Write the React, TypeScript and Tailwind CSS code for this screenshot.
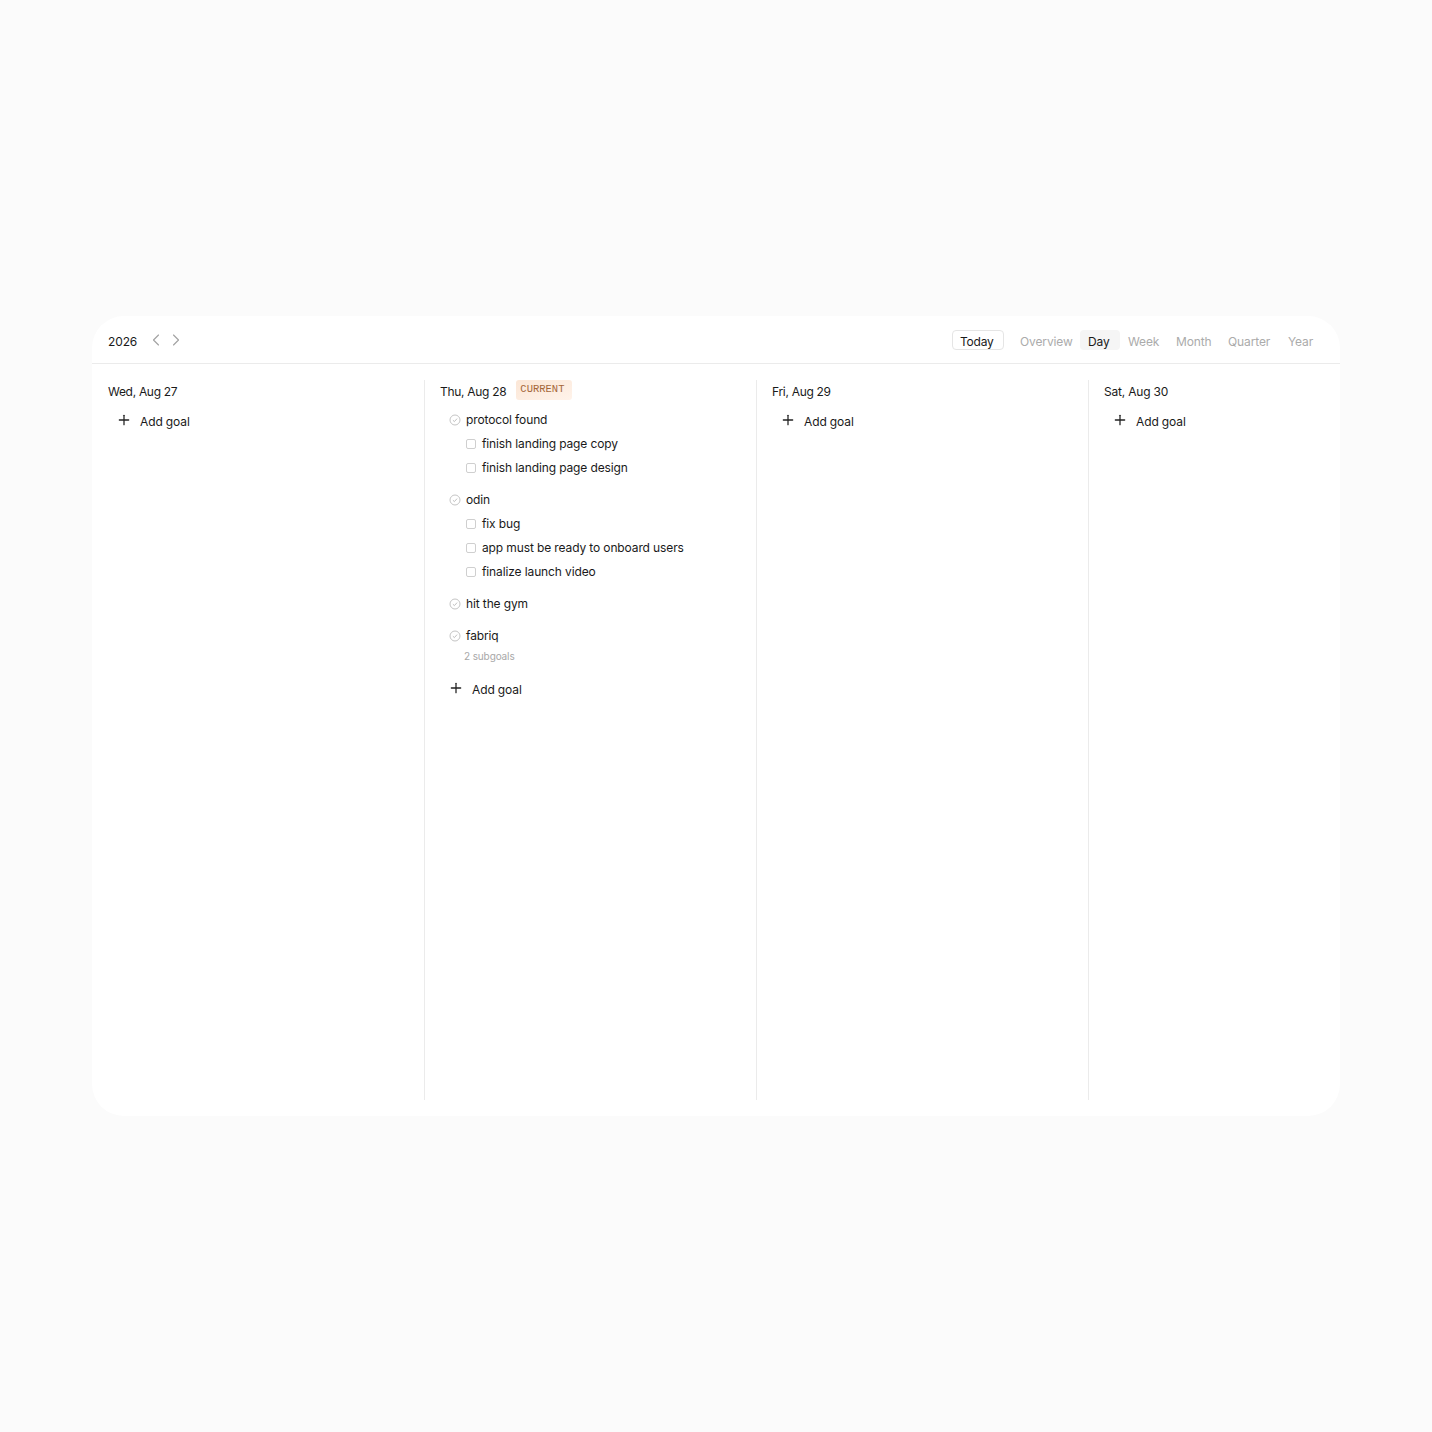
import { ChevronLeft, ChevronRight, Plus } from 'lucide-react';

const views = [
  { name: 'Overview', width: 'w-[68px]' },
  { name: 'Day', width: 'w-10' },
  { name: 'Week', width: 'w-12' },
  { name: 'Month', width: 'w-[52px]' },
  { name: 'Quarter', width: 'w-[60px]' },
  { name: 'Year', width: 'w-[41px]' },
];

const goals = [
  { name: 'protocol found', tasks: ['finish landing page copy', 'finish landing page design'] },
  { name: 'odin', tasks: ['fix bug', 'app must be ready to onboard users', 'finalize launch video'] },
  { name: 'hit the gym', tasks: [] },
  { name: 'fabriq', tasks: [], note: '2 subgoals' },
];

function GoalIcon() {
  return (
    <svg width="12" height="12" viewBox="0 0 12 12" fill="none" className="shrink-0">
      <circle cx="6" cy="6" r="5" stroke="#c4c4c4" />
      <path d="M3.9 6.2 5.4 7.6 8.1 4.6" stroke="#b0b0b0" strokeWidth="0.8" />
    </svg>
  );
}

function AddGoal() {
  return (
    <div className="flex h-6 items-center pl-2">
      <Plus className="mb-[2px] h-4 w-4 text-[#222]" strokeWidth={1.9} />
      <span className="ml-2 mt-px">Add goal</span>
    </div>
  );
}

function Goal({ name, tasks, note }: { name: string; tasks: string[]; note?: string }) {
  return (
    <div className="mb-2">
      <div className="flex h-6 items-center gap-[5px] pl-[9px]">
        <GoalIcon />
        <span>{name}</span>
      </div>
      {tasks.map((task) => (
        <div key={task} className="flex h-6 items-center gap-[6px] pl-[26px]">
          <span className="h-[10px] w-[10px] shrink-0 rounded-[2px] border border-[#cfcfcf]" />
          <span>{task}</span>
        </div>
      ))}
      {note && <div className="mt-[2px] pl-6 text-[10px] leading-[12px] text-[#a8a8a8]">{note}</div>}
    </div>
  );
}

export default function App() {
  return (
    <div className="flex h-[1432px] items-center justify-center bg-[#fbfbfb] font-['Inter',sans-serif] text-[12px] tracking-[-0.12px] text-[#1a1a1a]">
      <div className="h-[800px] w-[1248px] overflow-hidden rounded-[32px] bg-white">
        {/* Header */}
        <div className="flex h-12 items-center justify-between border-b border-[#ebebeb] pl-4 pr-[19px]">
          <div className="flex items-center">
            <span className="mt-1">2026</span>
            <ChevronLeft className="ml-[9px] h-5 w-5 text-[#a3a3a3]" strokeWidth={1.4} />
            <ChevronRight className="h-5 w-5 text-[#a3a3a3]" strokeWidth={1.4} />
          </div>
          <div className="flex items-center">
            <div className="mr-2 flex h-5 w-[52px] items-center rounded-[4px] border border-[#e5e5e5] pl-[7px] pt-1 tracking-[-0.2px]">
              Today
            </div>
            {views.map((view) => (
              <div
                key={view.name}
                className={
                  view.name === 'Day'
                    ? `flex h-5 items-center rounded-[4px] bg-[#f5f5f5] pl-2 pt-1 text-[#1a1a1a] ${view.width}`
                    : `flex h-5 items-center pl-2 pt-1 text-[#ababab] ${view.width}`
                }
              >
                {view.name}
              </div>
            ))}
          </div>
        </div>

        {/* Day columns */}
        <div className="mt-4 grid h-[720px] grid-cols-[333px_332px_332px_251px]">
          <div className="border-r border-[#ebebeb] pl-4">
            <div className="mb-[5px] flex h-6 items-center tracking-[-0.3px]">Wed, Aug 27</div>
            <AddGoal />
          </div>
          <div className="border-r border-[#ebebeb] pl-[15px]">
            <div className="flex h-6 items-center">
              <span className="tracking-[-0.3px]">Thu, Aug 28</span>
              <span className="mb-1 ml-[10px] flex h-5 w-14 rounded-[3px] bg-gradient-to-br from-[#fbe6d6] to-[#fff3ea] pl-1 font-['Liberation_Mono',monospace] text-[10.5px] leading-[18px] tracking-normal text-[#a5673a]">
                CURRENT
              </span>
            </div>
            <div className="mt-1">
              {goals.map((goal) => (
                <Goal key={goal.name} {...goal} />
              ))}
            </div>
            <div className="mt-[15px]">
              <AddGoal />
            </div>
          </div>
          <div className="border-r border-[#ebebeb] pl-[15px]">
            <div className="mb-[5px] flex h-6 items-center tracking-[-0.3px]">Fri, Aug 29</div>
            <AddGoal />
          </div>
          <div className="pl-[15px]">
            <div className="mb-[5px] flex h-6 items-center tracking-[-0.2px]">Sat, Aug 30</div>
            <AddGoal />
          </div>
        </div>
      </div>
    </div>
  );
}
